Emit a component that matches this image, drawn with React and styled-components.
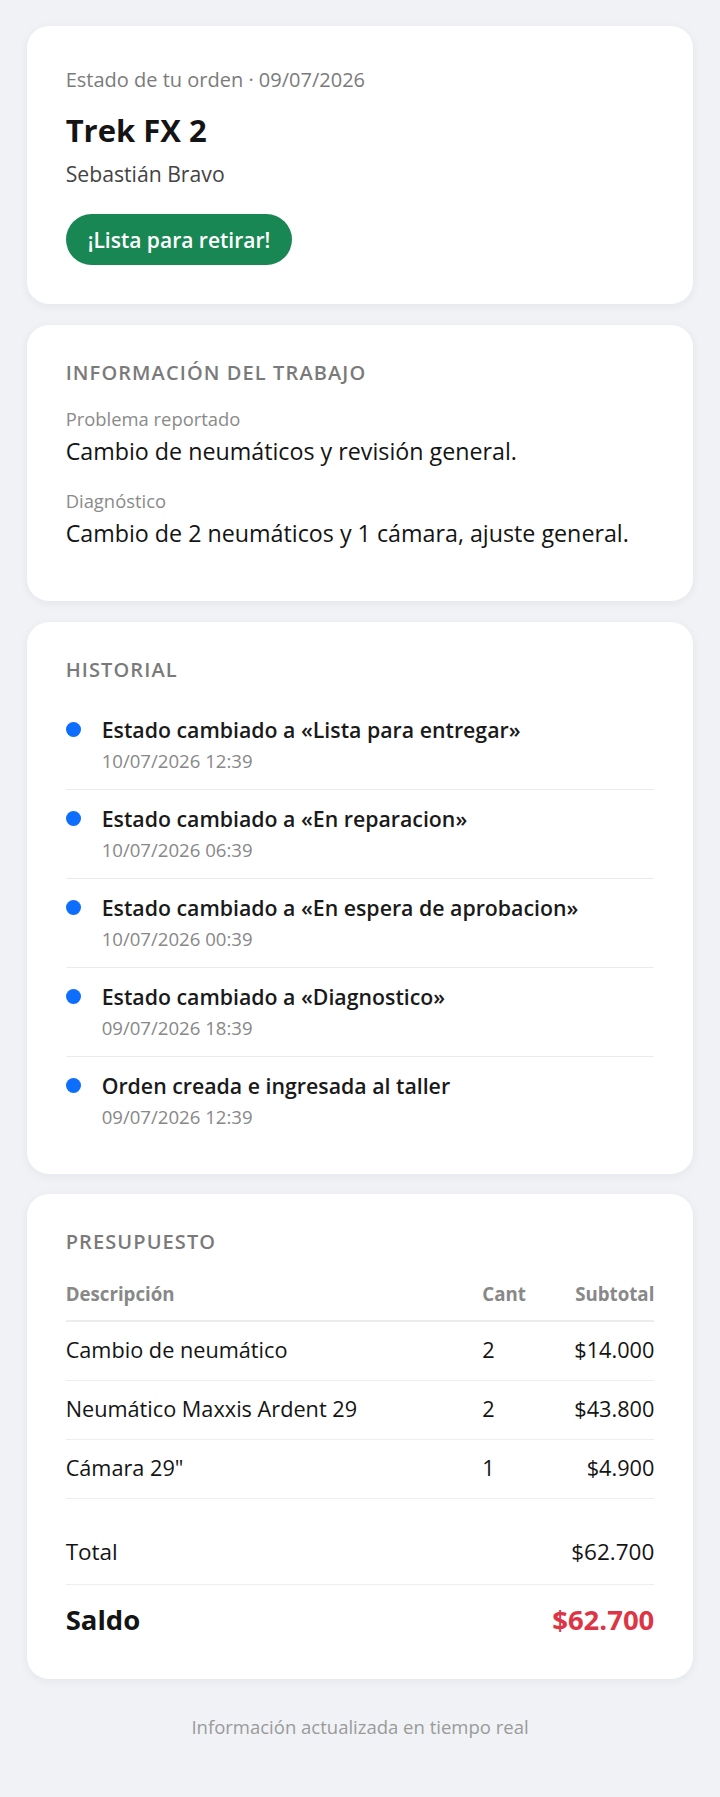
import React from 'react';
import styled, { createGlobalStyle } from 'styled-components';

const order = {
  date: '09/07/2026',
  bike: 'Trek FX 2',
  owner: 'Sebastián Bravo',
  status: '¡Lista para retirar!',
  problem: 'Cambio de neumáticos y revisión general.',
  diagnosis: 'Cambio de 2 neumáticos y 1 cámara, ajuste general.',
  history: [
    { text: 'Estado cambiado a «Lista para entregar»', at: '10/07/2026 12:39' },
    { text: 'Estado cambiado a «En reparacion»', at: '10/07/2026 06:39' },
    { text: 'Estado cambiado a «En espera de aprobacion»', at: '10/07/2026 00:39' },
    { text: 'Estado cambiado a «Diagnostico»', at: '09/07/2026 18:39' },
    { text: 'Orden creada e ingresada al taller', at: '09/07/2026 12:39' },
  ],
  items: [
    { desc: 'Cambio de neumático', qty: 2, subtotal: '$14.000' },
    { desc: 'Neumático Maxxis Ardent 29', qty: 2, subtotal: '$43.800' },
    { desc: 'Cámara 29"', qty: 1, subtotal: '$4.900' },
  ],
  total: '$62.700',
  balance: '$62.700',
};

const GlobalStyle = createGlobalStyle`
  * { box-sizing: border-box; }
  html, body {
    margin: 0;
    padding: 0;
    background: #f0f2f5;
  }
  body {
    font-family: "Open Sans", "Noto Sans", sans-serif;
    color: #141414;
  }
`;

const Page = styled.main`
  min-height: 100vh;
  padding: 26px 26.67px 56px;
`;

const Stack = styled.div`
  display: flex;
  flex-direction: column;
  gap: 20.5px;
`;

const Card = styled.section`
  background: #fff;
  border-radius: 22px;
  box-shadow: 0 2px 10px rgba(20, 30, 60, 0.06);
  padding: 34px 39px 39px;
`;

/* header card */
const Meta = styled.div`
  margin-top: 5.5px;
  font-size: 20px;
  line-height: 28px;
  color: #7b7b7b;
`;

const Bike = styled.h1`
  margin: 17px 0 0;
  font-size: 31px;
  line-height: 38px;
  font-weight: 700;
  color: #141414;
`;

const Owner = styled.div`
  margin-top: 10px;
  font-size: 21.2px;
  line-height: 30px;
  color: #444;
`;

const Badge = styled.div`
  width: fit-content;
  margin-top: 25.5px;
  padding: 10.5px 22px;
  border-radius: 999px;
  background: #198754;
  color: #fff;
  font-size: 21px;
  line-height: 30px;
  font-weight: 600;
`;

/* sections */
const SectionTitle = styled.h2`
  margin: 0;
  font-size: 20px;
  line-height: 28px;
  font-weight: 600;
  letter-spacing: 1.1px;
  text-transform: uppercase;
  color: #7a7a7a;
`;

const Fields = styled.div`
  display: flex;
  flex-direction: column;
  gap: 20px;
  margin-top: 19.5px;
  padding-bottom: 12px;
`;

const FieldLabel = styled.div`
  font-size: 18.4px;
  line-height: 26px;
  color: #8a8a8a;
`;

const FieldValue = styled.div`
  margin-top: 3px;
  font-size: 23.25px;
  line-height: 33px;
  color: #141414;
`;

/* history */
const Timeline = styled.ul`
  list-style: none;
  margin: 17px 0 0;
  padding: 0;
`;

const Event = styled.li`
  display: flex;
  gap: 21px;
  padding: 14px 0 15px;
  border-bottom: 1px solid #ebebeb;

  &:last-child {
    border-bottom: none;
    padding-bottom: 5px;
  }
`;

const Dot = styled.span`
  flex: none;
  width: 15px;
  height: 15px;
  margin-top: 7.5px;
  border-radius: 50%;
  background: #0d6efd;
`;

const EventTitle = styled.div`
  font-size: 21.3px;
  line-height: 30px;
  font-weight: 600;
  color: #1a1a1a;
`;

const EventDate = styled.div`
  margin-top: 3px;
  font-size: 18.6px;
  line-height: 26px;
  color: #888;
`;

/* budget */
const Table = styled.div`
  margin-top: 25.4px;
`;

const Row = styled.div`
  display: grid;
  grid-template-columns: 1fr 76px 96px;
  padding: ${({ $head }) => ($head ? '0 0 12.6px' : '13.5px 0 14.5px')};
  border-bottom: ${({ $head }) => ($head ? '2px solid #ececec' : '1px solid #eeeeee')};
  font-size: ${({ $head }) => ($head ? '18.7px' : '21.7px')};
  line-height: ${({ $head }) => ($head ? '26px' : '30px')};
  font-weight: ${({ $head }) => ($head ? 700 : 400)};
  color: ${({ $head }) => ($head ? '#888' : '#141414')};
  white-space: nowrap;
`;

const Cell = styled.div`
  text-align: ${({ $right }) => ($right ? 'right' : 'left')};
`;

const SumRow = styled.div`
  display: flex;
  justify-content: space-between;
  align-items: baseline;
  margin-top: ${({ $strong }) => ($strong ? '0' : '21px')};
  padding: ${({ $strong }) => ($strong ? '17px 0 2px' : '16px 0')};
  border-bottom: ${({ $strong }) => ($strong ? 'none' : '1px solid #eeeeee')};
  font-size: ${({ $strong }) => ($strong ? '27.5px' : '22.5px')};
  line-height: ${({ $strong }) => ($strong ? '36px' : '32px')};
  font-weight: ${({ $strong }) => ($strong ? 700 : 400)};
  color: #141414;
`;

const Amount = styled.span`
  color: ${({ $due }) => ($due ? '#dc3545' : 'inherit')};
`;

const Footer = styled.footer`
  margin-top: 34.8px;
  text-align: center;
  font-size: 18.5px;
  line-height: 26px;
  color: #9a9a9a;
`;

export default function App() {
  return (
    <>
      <GlobalStyle />
      <Page>
        <Stack>
          <Card>
            <Meta>Estado de tu orden · {order.date}</Meta>
            <Bike>{order.bike}</Bike>
            <Owner>{order.owner}</Owner>
            <Badge>{order.status}</Badge>
          </Card>

          <Card>
            <SectionTitle>Información del trabajo</SectionTitle>
            <Fields>
              <div>
                <FieldLabel>Problema reportado</FieldLabel>
                <FieldValue>{order.problem}</FieldValue>
              </div>
              <div>
                <FieldLabel>Diagnóstico</FieldLabel>
                <FieldValue>{order.diagnosis}</FieldValue>
              </div>
            </Fields>
          </Card>

          <Card>
            <SectionTitle>Historial</SectionTitle>
            <Timeline>
              {order.history.map((h) => (
                <Event key={h.at}>
                  <Dot />
                  <div>
                    <EventTitle>{h.text}</EventTitle>
                    <EventDate>{h.at}</EventDate>
                  </div>
                </Event>
              ))}
            </Timeline>
          </Card>

          <Card>
            <SectionTitle>Presupuesto</SectionTitle>
            <Table>
              <Row $head>
                <Cell>Descripción</Cell>
                <Cell>Cant</Cell>
                <Cell $right>Subtotal</Cell>
              </Row>
              {order.items.map((it) => (
                <Row key={it.desc}>
                  <Cell>{it.desc}</Cell>
                  <Cell>{it.qty}</Cell>
                  <Cell $right>{it.subtotal}</Cell>
                </Row>
              ))}
            </Table>
            <SumRow>
              <span>Total</span>
              <Amount>{order.total}</Amount>
            </SumRow>
            <SumRow $strong>
              <span>Saldo</span>
              <Amount $due>{order.balance}</Amount>
            </SumRow>
          </Card>
        </Stack>
        <Footer>Información actualizada en tiempo real</Footer>
      </Page>
    </>
  );
}
